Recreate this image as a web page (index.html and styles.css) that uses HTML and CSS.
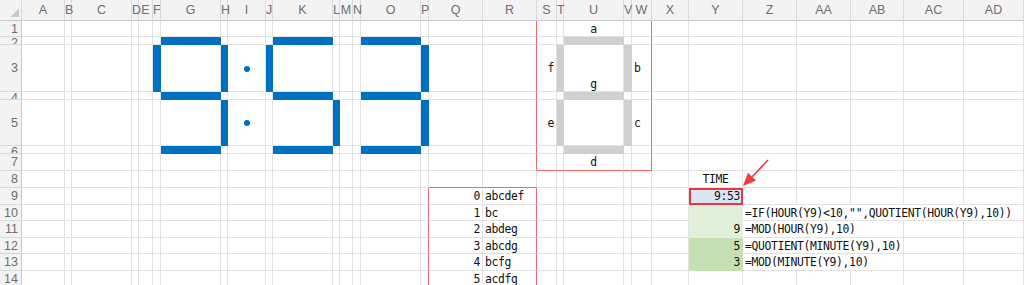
FILE: index.html
```html
<!DOCTYPE html>
<html><head><meta charset="utf-8">
<title>7セグ時計</title>
<link rel="stylesheet" href="styles.css">
</head>
<body>

<table class="sheet">
<colgroup>
<col class="w22"><col class="w43"><col class="w7"><col class="w60"><col class="w7"><col class="w14"><col class="w8"><col class="w60"><col class="w7"><col class="w38"><col class="w7"><col class="w60"><col class="w7"><col class="w13"><col class="w8"><col class="w60"><col class="w8"><col class="w54"><col class="w54"><col class="w20"><col class="w7"><col class="w60"><col class="w8"><col class="w20"><col class="w37"><col class="w54"><col class="w54"><col class="w54"><col class="w53"><col class="w60"><col class="w60">
</colgroup>
<tr class="hd">
<th class="corner"></th><th>A</th><th>B</th><th>C</th><th>D</th><th>E</th><th>F</th><th>G</th><th>H</th><th>I</th><th>J</th><th>K</th><th>L</th><th>M</th><th>N</th><th>O</th><th>P</th><th>Q</th><th>R</th><th>S</th><th>T</th><th>U</th><th>V</th><th>W</th><th>X</th><th>Y</th><th>Z</th><th>AA</th><th>AB</th><th>AC</th><th>AD</th>
</tr>
<tr class="h16">
<th class="rn">1</th><td></td><td></td><td></td><td></td><td></td><td></td><td></td><td></td><td></td><td></td><td></td><td></td><td></td><td></td><td></td><td></td><td></td><td class="rr"></td><td></td><td></td><td class="c">a</td><td></td><td class="rr"></td><td></td><td></td><td></td><td></td><td></td><td></td><td></td>
</tr>
<tr class="h8">
<th class="rn"><div class="clip">2</div></th><td></td><td></td><td></td><td></td><td></td><td></td><td class="on"></td><td></td><td></td><td></td><td class="on"></td><td></td><td></td><td></td><td class="on"></td><td></td><td></td><td class="rr"></td><td></td><td></td><td class="off"></td><td></td><td class="rr"></td><td></td><td></td><td></td><td></td><td></td><td></td><td></td>
</tr>
<tr class="h47">
<th class="rn">3</th><td></td><td></td><td></td><td></td><td></td><td class="on"></td><td></td><td class="on"></td><td class="c"><span class="dot"></span></td><td class="on"></td><td></td><td></td><td></td><td></td><td></td><td class="on"></td><td></td><td class="rr"></td><td class="r">f</td><td class="off"></td><td class="c bot">g</td><td class="off"></td><td class="rr">b</td><td></td><td></td><td></td><td></td><td></td><td></td><td></td>
</tr>
<tr class="h7">
<th class="rn"><div class="clip">4</div></th><td></td><td></td><td></td><td></td><td></td><td></td><td class="on"></td><td></td><td></td><td></td><td class="on"></td><td></td><td></td><td></td><td class="on"></td><td></td><td></td><td class="rr"></td><td></td><td></td><td class="off"></td><td></td><td class="rr"></td><td></td><td></td><td></td><td></td><td></td><td></td><td></td>
</tr>
<tr class="h46">
<th class="rn">5</th><td></td><td></td><td></td><td></td><td></td><td></td><td></td><td class="on"></td><td class="c"><span class="dot"></span></td><td></td><td></td><td class="on"></td><td></td><td></td><td></td><td class="on"></td><td></td><td class="rr"></td><td class="r">e</td><td class="off"></td><td></td><td class="off"></td><td class="rr">c</td><td></td><td></td><td></td><td></td><td></td><td></td><td></td>
</tr>
<tr class="h7">
<th class="rn"><div class="clip">6</div></th><td></td><td></td><td></td><td></td><td></td><td></td><td class="on"></td><td></td><td></td><td></td><td class="on"></td><td></td><td></td><td></td><td class="on"></td><td></td><td></td><td class="rr"></td><td></td><td></td><td class="off"></td><td></td><td class="rr"></td><td></td><td></td><td></td><td></td><td></td><td></td><td></td>
</tr>
<tr class="h17">
<th class="rn">7</th><td></td><td></td><td></td><td></td><td></td><td></td><td></td><td></td><td></td><td></td><td></td><td></td><td></td><td></td><td></td><td></td><td></td><td class="rr"></td><td class="rb"></td><td class="rb"></td><td class="rb c">d</td><td class="rb"></td><td class="rr rb"></td><td></td><td></td><td></td><td></td><td></td><td></td><td></td>
</tr>
<tr class="h17">
<th class="rn">8</th><td></td><td></td><td></td><td></td><td></td><td></td><td></td><td></td><td></td><td></td><td></td><td></td><td></td><td></td><td></td><td></td><td class="rb"></td><td class="rb"></td><td></td><td></td><td></td><td></td><td></td><td></td><td class="c">TIME</td><td></td><td></td><td></td><td></td><td></td>
</tr>
<tr class="h17">
<th class="rn">9</th><td></td><td></td><td></td><td></td><td></td><td></td><td></td><td></td><td></td><td></td><td></td><td></td><td></td><td></td><td></td><td class="rr"></td><td class="r">0</td><td class="rr">abcdef</td><td></td><td></td><td></td><td></td><td></td><td></td><td class="r time sel">9:53</td><td></td><td></td><td></td><td></td><td></td>
</tr>
<tr class="h16">
<th class="rn">10</th><td></td><td></td><td></td><td></td><td></td><td></td><td></td><td></td><td></td><td></td><td></td><td></td><td></td><td></td><td></td><td class="rr"></td><td class="r">1</td><td class="rr">bc</td><td></td><td></td><td></td><td></td><td></td><td></td><td class="r hr"></td><td colspan="5">=IF(HOUR(Y9)&lt;10,"",QUOTIENT(HOUR(Y9),10))</td>
</tr>
<tr class="h17">
<th class="rn">11</th><td></td><td></td><td></td><td></td><td></td><td></td><td></td><td></td><td></td><td></td><td></td><td></td><td></td><td></td><td></td><td class="rr"></td><td class="r">2</td><td class="rr">abdeg</td><td></td><td></td><td></td><td></td><td></td><td></td><td class="r hr">9</td><td colspan="3">=MOD(HOUR(Y9),10)</td><td></td><td></td>
</tr>
<tr class="h16">
<th class="rn">12</th><td></td><td></td><td></td><td></td><td></td><td></td><td></td><td></td><td></td><td></td><td></td><td></td><td></td><td></td><td></td><td class="rr"></td><td class="r">3</td><td class="rr">abcdg</td><td></td><td></td><td></td><td></td><td></td><td></td><td class="r mn">5</td><td colspan="3">=QUOTIENT(MINUTE(Y9),10)</td><td></td><td></td>
</tr>
<tr class="h17">
<th class="rn">13</th><td></td><td></td><td></td><td></td><td></td><td></td><td></td><td></td><td></td><td></td><td></td><td></td><td></td><td></td><td></td><td class="rr"></td><td class="r">4</td><td class="rr">bcfg</td><td></td><td></td><td></td><td></td><td></td><td></td><td class="r mn">3</td><td colspan="3">=MOD(MINUTE(Y9),10)</td><td></td><td></td>
</tr>
<tr class="h17">
<th class="rn">14</th><td></td><td></td><td></td><td></td><td></td><td></td><td></td><td></td><td></td><td></td><td></td><td></td><td></td><td></td><td></td><td class="rr"></td><td class="r">5</td><td class="rr">acdfg</td><td></td><td></td><td></td><td></td><td></td><td></td><td></td><td></td><td></td><td></td><td></td><td></td>
</tr>
</table>

<svg class="arrow" width="1024" height="285" viewBox="0 0 1024 285">
	<line x1="768" y1="160" x2="752" y2="177" stroke="#f23a3a" stroke-width="1.6"/>
	<polygon points="743,186 756,180.4 748,172.8" fill="#f23a3a"/>
</svg>

</body>
</html>
```

FILE: styles.css
```css
body {
	margin: 0;
	position: relative;
	overflow: hidden;
	background-color: #fff;
	font-family: "DejaVu Sans Mono", monospace;
	font-size: 11.4px;
	letter-spacing: -0.35px;
	color: #111;
}
.sheet {
	border-collapse: separate;
	border-spacing: 0;
	table-layout: fixed;
	width: 1024px;
}
.sheet td, .sheet th {
	box-sizing: border-box;
	padding: 0 2px;
	border-right: 1px solid #e2e2e2;
	border-bottom: 1px solid #e2e2e2;
	white-space: nowrap;
	overflow: visible;
	vertical-align: middle;
	text-align: left;
	font-weight: normal;
	line-height: 14px;
}
.w7 { width: 7px; }
.w8 { width: 8px; }
.w13 { width: 13px; }
.w14 { width: 14px; }
.w20 { width: 20px; }
.w22 { width: 22px; }
.w37 { width: 37px; }
.w38 { width: 38px; }
.w43 { width: 43px; }
.w53 { width: 53px; }
.w54 { width: 54px; }
.w60 { width: 60px; }

.hd { height: 21px; }
.h7 { height: 7px; }
.h8 { height: 8px; }
.h16 { height: 16px; }
.h17 { height: 17px; }
.h46 { height: 46px; }
.h47 { height: 47px; }

/* headers */
.sheet .hd th {
	padding: 0 0 2px 0;
	text-align: center;
	vertical-align: bottom;
	font-family: "Liberation Sans", Arial, sans-serif;
	font-size: 12.5px;
	letter-spacing: 0;
	line-height: 15px;
	color: #6e6e6e;
	background-color: #f3f3f3;
	border-right-color: #dadada;
	border-bottom-color: #c9c9c9;
}
.sheet .hd th.corner {
	background: linear-gradient(135deg, transparent 50%, #c9c9c9 50%) no-repeat right 2px bottom 3px / 8px 8px, #f3f3f3;
}
.sheet th.rn {
	padding: 0 3px 0 0;
	text-align: right;
	font-family: "Liberation Sans", Arial, sans-serif;
	font-size: 12.5px;
	letter-spacing: 0;
	color: #6e6e6e;
	background-color: #f3f3f3;
	border-right-color: #c9c9c9;
	border-bottom-color: #dadada;
}
.clip {
	height: 7px;
	overflow: hidden;
	line-height: 13px;
}

/* segments */
.sheet td.on {
	background-color: #0070c0;
	border-color: #0070c0;
}
.sheet td.off {
	background-color: #d0d0d0;
	border-color: #d0d0d0;
}
.dot {
	display: inline-block;
	width: 6px;
	height: 6px;
	border-radius: 50%;
	background-color: #0070c0;
	vertical-align: middle;
}

/* alignment */
.sheet td.r { text-align: right; }
.sheet td.c { text-align: center; }
.sheet td.bot { vertical-align: bottom; padding-bottom: 0; }

/* red frames */
.sheet td.rr { border-right-color: #f36868; }
.sheet td.rb { border-bottom-color: #f36868; }
.sheet td.sel {
	outline: 2px solid #e43a3f;
	outline-offset: -2px;
}

/* fills */
.sheet td.time {
	background-color: #dbe6f2;
	border-color: #dbe6f2;
}
.sheet td.hr {
	background-color: #e2efda;
	border-color: #e2efda;
}
.sheet td.mn {
	background-color: #c6e0b4;
	border-color: #c6e0b4;
}

.arrow {
	position: absolute;
	left: 0;
	top: 0;
	pointer-events: none;
}
```
